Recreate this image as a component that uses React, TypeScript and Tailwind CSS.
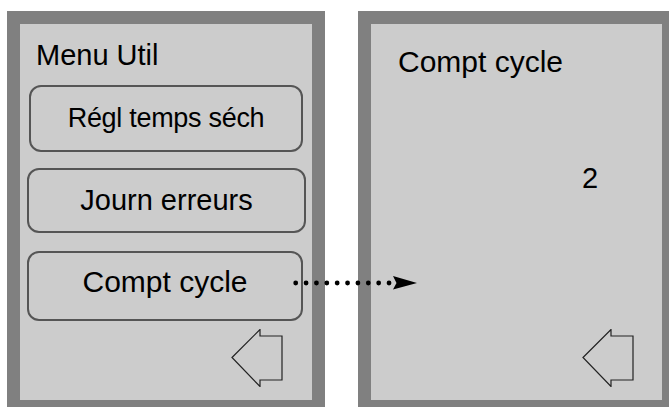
import React from 'react';

function BackArrow() {
  return (
    <svg width="52" height="58" viewBox="0 0 52 58" className="block">
      <path
        d="M1 28.5 L29 0.5 L29 7 L51 7 L51 51 L29 51 L29 57.5 Z"
        fill="none"
        stroke="#222"
        strokeWidth="1.2"
        strokeLinejoin="miter"
      />
    </svg>
  );
}

function DottedArrow() {
  const dots = Array.from({ length: 10 }, (_, i) => 5.7 + i * 10.37);
  return (
    <svg width="130" height="18" viewBox="0 0 130 18" className="absolute left-[290px] top-[274px]">
      {dots.map((cx) => (
        <circle key={cx} cx={cx} cy="9" r="2.4" fill="#000" />
      ))}
      <path d="M103 2 L127 9 L103 15.5 L106.5 9 Z" fill="#000" />
    </svg>
  );
}

export default function App() {
  return (
    <div
      className="relative w-[669px] h-[407px] overflow-hidden bg-white flex gap-[33px] pl-[7px] pt-[11px] text-black"
      style={{ fontFamily: '"Liberation Sans", Arial, sans-serif' }}
    >
      {/* menu screen */}
      <div className="w-[318px] h-[402px] shrink-0 border-[13px] border-[#808080] bg-[#cccccc] flex flex-col">
        <div className="ml-[16px] mt-[14px] text-[29px] leading-[34px]">Menu Util</div>
        <div className="mt-[13px] ml-[9px] w-[274px] h-[67px] border-2 border-[#555] rounded-[12px] flex items-center justify-center text-[27px] tracking-[-0.3px]">
          Régl temps séch
        </div>
        <div className="mt-[16px] ml-[7px] w-[279px] h-[65px] border-2 border-[#555] rounded-[12px] flex items-center justify-center text-[29px]">
          Journ erreurs
        </div>
        <div className="mt-[18px] ml-[7px] w-[276px] h-[70px] border-2 border-[#555] rounded-[12px] flex items-center justify-center pb-[10px] text-[30px]">
          Compt cycle
        </div>
        <div className="mt-auto self-end mr-[29px] mb-[13px]">
          <BackArrow />
        </div>
      </div>

      {/* counter screen */}
      <div className="w-[317px] h-[402px] shrink-0 border-[13px] border-[#808080] bg-[#cccccc] flex flex-col">
        <div className="ml-[27px] mt-[21px] text-[30px] leading-[34px]">Compt cycle</div>
        <div className="ml-[211px] mt-[82px] text-[29px] leading-[34px]">2</div>
        <div className="mt-auto self-end mr-[28px] mb-[13px]">
          <BackArrow />
        </div>
      </div>

      <DottedArrow />
    </div>
  );
}
